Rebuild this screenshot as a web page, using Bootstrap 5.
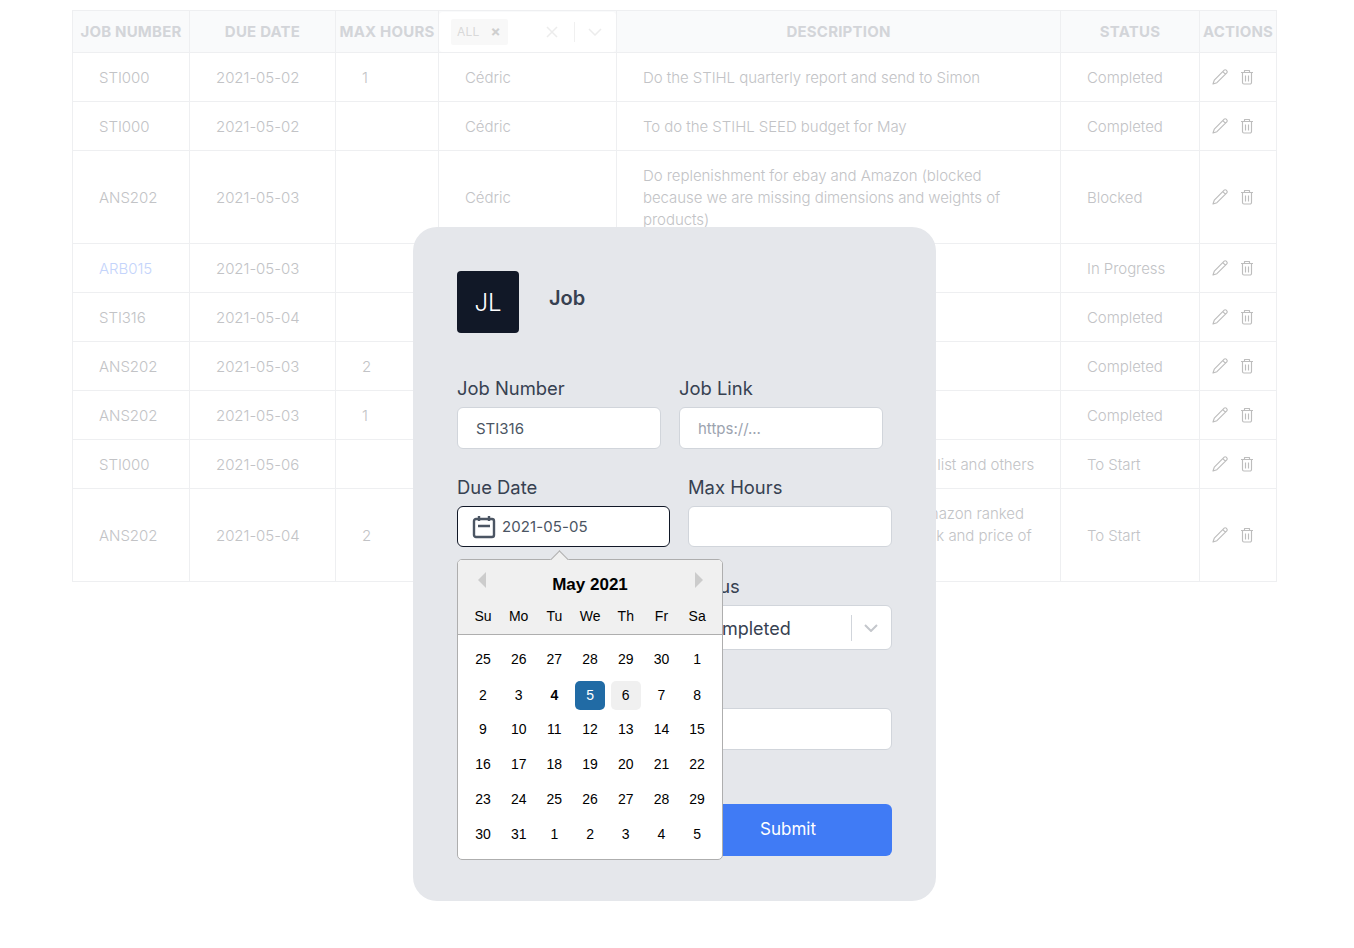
<!DOCTYPE html>
<html lang="en">
<head>
  <meta charset="UTF-8">
  <title>Jobs</title>
  <link href="https://cdn.jsdelivr.net/npm/bootstrap@5.3.2/dist/css/bootstrap.min.css" rel="stylesheet">
  <style>
    body { font-family: Inter, "Noto Sans", sans-serif; background: #fff; }
    .page-wrap { padding: 10px 77px 0 72px; }

    /* jobs table, faded behind the modal */
    .jobs-table { table-layout: fixed; width: 1204px; font-size: 15px; font-weight: 300; line-height: 22px; letter-spacing: -.05px; --bs-border-color: #eeeff1; margin: 0; }
    .jobs-table > :not(caption) > * > * { padding: 2px 26px 0; color: #c2c3c6; }
    .jobs-table thead th { height: 42px; padding: 0; background: #f9fafb; text-align: center; vertical-align: middle; color: #d3d5d9; font-weight: 700; font-size: 15px; letter-spacing: .2px; }
    .jobs-table tbody tr { height: 49px; }
    .jobs-table tbody tr.tall { height: 93px; }
    .jobs-table a { color: #c4d4fb; text-decoration: none; }
    .jobs-table .c-desc { padding-right: 0; white-space: nowrap; }
    .jobs-table .c-actions { padding: 0 0 0 12px; }
    .c1 { width: 117px; } .c2 { width: 146px; } .c3 { width: 103px; } .c4 { width: 178px; }
    .c5 { width: 444px; } .c6 { width: 139px; } .c7 { width: 77px; }
    .head-select { height: 40px; background: #fff; border-radius: 4px; padding-left: 12px; padding-right: 14px; }
    .head-chip { background: #f8f8f8; border-radius: 2px; width: 57px; height: 26px; font-size: 12px; font-weight: 400; color: #d9d9d9; padding-left: 6px; gap: 11px; }
    .head-x { font-size: 15px; line-height: 1; font-weight: 700; color: #cfcfcf; }
    .head-sep { width: 1px; height: 20px; background: #f0f0f0; margin: 0 13px 0 16px; }
    .row-icon { width: 16px; height: 16px; fill: none; stroke: #bdbdbd; stroke-width: 1.15; stroke-linejoin: round; }
    .row-icons { gap: 11px; }

    /* modal */
    .job-modal { position: absolute; left: 413px; top: 227px; width: 523px; height: 674px; padding: 44px; background: #e5e7eb; border-radius: 24px; color: #374151; }
    .job-avatar { width: 62px; height: 62px; background: #111827; color: #fff; border-radius: 4px; font-size: 24px; font-weight: 300; padding-top: 2px; }
    .job-title { margin: 13px 0 0 30px; font-size: 20px; line-height: 28px; font-weight: 600; }
    .form-top { margin-top: 43px; grid-template-columns: 204px 204px; column-gap: 18px; }
    .form-bottom { margin-top: 26px; grid-template-columns: 213px 204px; column-gap: 18px; }
    .field-label { display: block; margin-bottom: 7px; font-size: 18.4px; line-height: 24px; color: #374151; }
    .field-input.form-control { height: 42px; padding: 0 18px; font-size: 15px; color: #4b5563; border: 1px solid #d1d5db; border-radius: 6px; background: #fff; box-shadow: none; }
    .field-input::placeholder { color: #9ca3af; }
    .date-input { height: 41px; background: #fff; border: 1px solid #111827; border-radius: 6px; padding-left: 14px; gap: 6px; font-size: 15px; color: #4b5563; letter-spacing: .1px; }
    .date-text { margin-top: 2px; }
    .hours-input.field-input.form-control { height: 41px; }
    .status-field { margin-top: 27px; }
    .status-label { margin-bottom: 7px; margin-left: -3px; }
    .status-select { height: 45px; background: #fff; border: 1px solid #d1d5db; border-radius: 6px; padding: 1px 0 0 9px; font-size: 18px; color: #374151; }
    .status-sep { width: 1px; height: 26px; background: #d1d5db; margin-left: auto; }
    .status-chevron { margin: 0 13px 0 12px; }
    .notes-field { margin-top: 58px; }
    .submit-btn.btn { display: block; width: 208px; height: 52px; margin: 54px 0 0 -4px; background: #407bf5; border: 0; border-radius: 6px; font-size: 17px; color: #fff; }

    /* date picker popup */
    .cal-pop { position: absolute; left: 44px; top: 332px; width: 266px; height: 301px; background: #fff; border: 1px solid #aeaeae; border-radius: 5px; font-family: "Liberation Sans", Arial, sans-serif; font-size: 14px; color: #000; }
    .cal-pop::before { content: ""; position: absolute; left: 95px; top: -7px; width: 13px; height: 13px; background: #f0f0f0; border: 1px solid #aeaeae; border-right: 0; border-bottom: 0; transform: rotate(45deg); }
    .cal-head { position: relative; height: 75px; background: #f0f0f0; border-bottom: 1px solid #aeaeae; border-radius: 4px 4px 0 0; }
    .cal-month { padding-top: 14px; font-size: 17px; line-height: 22px; font-weight: 700; text-align: center; }
    .cal-nav { position: absolute; top: 12px; border-top: 8px solid transparent; border-bottom: 8px solid transparent; }
    .cal-prev { left: 20px; border-right: 8px solid #ccc; }
    .cal-next { right: 19px; border-left: 8px solid #ccc; }
    .cal-grid { display: grid; grid-template-columns: repeat(7, 30px); column-gap: 5.7px; padding-left: 10px; justify-content: start; }
    .cal-names { margin-top: 10px; line-height: 20px; text-align: center; }
    .cal-days { padding-top: 10px; row-gap: 6px; }
    .cal-day { height: 29px; line-height: 29px; text-align: center; border-radius: 5px; }
    .cal-week2 { transform: translateY(1px); }
    .cal-today { font-weight: 700; }
    .cal-selected { background: #216ba5; color: #fff; }
    .cal-hover { background: #f0f0f0; }
  </style>
</head>
<body>
  <svg width="0" height="0" class="position-absolute">
    <symbol id="ico-pencil" viewBox="0 0 16 16"><path d="M12.2 1.200a1.400 1.400 0 0 1 2 0l.6.6a1.400 1.400 0 0 1 0 2L4.900 13.700 1 15l1.300-3.900zM10.800 2.600l2.600 2.600"/></symbol>
    <symbol id="ico-trash" viewBox="0 0 16 16"><path d="M2 3.500h12M5.500 3.500V1.500h5v2M3.500 3.500v10a1.500 1.500 0 0 0 1.500 1.500h6a1.500 1.500 0 0 0 1.500-1.500v-10M6.500 6.500v6M9.500 6.500v6"/></symbol>
  </svg>

  <div class="page-wrap">
    <table class="table table-bordered align-middle jobs-table">
      <colgroup>
        <col class="c1"><col class="c2"><col class="c3"><col class="c4"><col class="c5"><col class="c6"><col class="c7">
      </colgroup>
      <thead>
        <tr>
          <th>JOB NUMBER</th>
          <th>DUE DATE</th>
          <th>MAX HOURS</th>
          <th>
            <div class="head-select d-flex align-items-center">
              <span class="head-chip d-flex align-items-center">ALL <span class="head-x">×</span></span>
              <svg class="ms-auto" width="12" height="12" viewBox="0 0 12 12" fill="none" stroke="#ececec" stroke-width="1.5"><path d="M1 1l10 10M11 1L1 11"/></svg>
              <span class="head-sep"></span>
              <svg width="14" height="8" viewBox="0 0 14 8" fill="none" stroke="#ececec" stroke-width="1.5"><path d="M1 1l6 6 6-6"/></svg>
            </div>
          </th>
          <th>DESCRIPTION</th>
          <th>STATUS</th>
          <th>ACTIONS</th>
        </tr>
      </thead>
      <tbody id="jobRows"></tbody>
    </table>
  </div>

  <div class="job-modal">
    <div class="d-flex align-items-start">
      <div class="job-avatar d-flex align-items-center justify-content-center">JL</div>
      <div class="job-title">Job</div>
    </div>

    <div class="form-top d-grid">
      <div>
        <label class="field-label">Job Number</label>
        <input class="form-control field-input" value="STI316">
      </div>
      <div>
        <label class="field-label">Job Link</label>
        <input class="form-control field-input" placeholder="https://...">
      </div>
    </div>

    <div class="form-bottom d-grid">
      <div>
        <label class="field-label">Due Date</label>
        <div class="date-input d-flex align-items-center">
          <svg width="24" height="24" viewBox="0 0 24 24" fill="none" stroke="#4b5563" stroke-width="2.4" stroke-linejoin="round"><rect x="2" y="4" width="20" height="18" rx="2"/><path d="M7 1v5M17 1v5M6 11h12"/></svg>
          <span class="date-text">2021-05-05</span>
        </div>
      </div>
      <div>
        <label class="field-label">Max Hours</label>
        <input class="form-control field-input hours-input">
        <div class="status-field">
          <label class="field-label status-label">Status</label>
          <div class="status-select d-flex align-items-center">
            Completed
            <span class="status-sep"></span>
            <svg class="status-chevron" width="14" height="8" viewBox="0 0 14 8" fill="none" stroke="#c4c7cc" stroke-width="2"><path d="M1 1l6 6 6-6"/></svg>
          </div>
        </div>
        <div class="notes-field">
          <input class="form-control field-input">
        </div>
        <button type="button" class="btn submit-btn">Submit</button>
      </div>
    </div>

    <div class="cal-pop">
      <div class="cal-head">
        <span class="cal-nav cal-prev"></span>
        <span class="cal-nav cal-next"></span>
        <div class="cal-month">May 2021</div>
        <div class="cal-grid cal-names">
          <div>Su</div><div>Mo</div><div>Tu</div><div>We</div><div>Th</div><div>Fr</div><div>Sa</div>
        </div>
      </div>
      <div class="cal-grid cal-days" id="calDays"></div>
    </div>
  </div>

  <script src="https://cdn.jsdelivr.net/npm/bootstrap@5.3.2/dist/js/bootstrap.bundle.min.js"></script>
  <script>
    const jobs = [
      ['STI000', '2021-05-02', '1', 'Cédric', 'Do the STIHL quarterly report and send to Simon', 'Completed'],
      ['STI000', '2021-05-02', '', 'Cédric', 'To do the STIHL SEED budget for May', 'Completed'],
      ['ANS202', '2021-05-03', '', 'Cédric', 'Do replenishment for ebay and Amazon (blocked<br>because we are missing dimensions and weights of<br>products)', 'Blocked', true],
      ['<a href="#">ARB015</a>', '2021-05-03', '', '', '', 'In Progress'],
      ['STI316', '2021-05-04', '', '', '', 'Completed'],
      ['ANS202', '2021-05-03', '2', '', '', 'Completed'],
      ['ANS202', '2021-05-03', '1', '', '', 'Completed'],
      ['STI000', '2021-05-06', '', '', 'Send the updated reseller network pricing list and others', 'To Start'],
      ['ANS202', '2021-05-04', '2', '', 'Review the product listings to compare Amazon ranked<br>Compare against other shops by their stock and price of<br>items', 'To Start', true]
    ];

    // table rows
    document.getElementById('jobRows').innerHTML = jobs.map(job => `
      <tr class="${job[6] ? 'tall' : ''}">
        <td>${job[0]}</td><td>${job[1]}</td><td>${job[2]}</td><td>${job[3]}</td><td class="c-desc">${job[4]}</td><td>${job[5]}</td>
        <td class="c-actions">
          <div class="d-flex row-icons">
            <svg class="row-icon"><use href="#ico-pencil"/></svg>
            <svg class="row-icon"><use href="#ico-trash"/></svg>
          </div>
        </td>
      </tr>`).join('');

    // calendar days
    const days = [25,26,27,28,29,30,1,2,3,4,5,6,7,8,9,10,11,12,13,14,15,16,17,18,19,20,21,22,23,24,25,26,27,28,29,30,31,1,2,3,4,5];
    document.getElementById('calDays').innerHTML = days.map((d, i) => {
      let cls = 'cal-day';
      if (i >= 7 && i < 14) cls += ' cal-week2';
      if (i === 9) cls += ' cal-today';
      if (i === 10) cls += ' cal-selected';
      if (i === 11) cls += ' cal-hover';
      return `<div class="${cls}">${d}</div>`;
    }).join('');
  </script>
</body>
</html>
